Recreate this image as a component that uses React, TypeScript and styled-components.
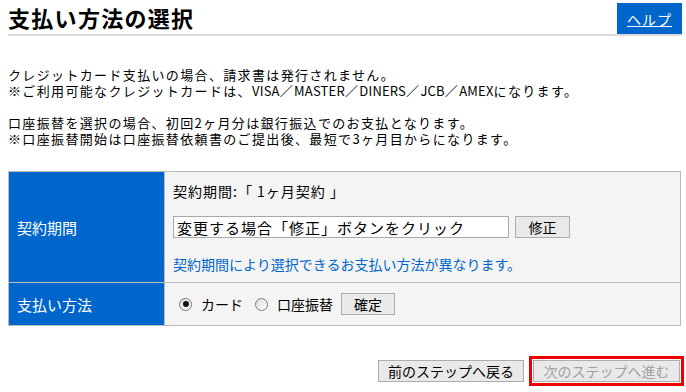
import React from "react";
import styled, { createGlobalStyle } from "styled-components";

const GlobalStyle = createGlobalStyle`
  html, body { margin: 0; padding: 0; background: #fff; overflow: hidden; }
  body {
    font-family: "Noto Sans CJK JP", "Noto Sans", sans-serif;
    color: #000;
  }
`;

const Page = styled.div`
  width: 676px;
  padding: 3px 0 0 8px;
`;

const Header = styled.div`
  width: 674px;
  display: flex;
  justify-content: space-between;
  align-items: flex-end;
  border-bottom: 2px solid #dcdcdc;
`;

const Title = styled.h1`
  margin: 0 0 4px 0;
  font-size: 22px;
  line-height: 26px;
  font-weight: bold;
  letter-spacing: 1.3px;
`;

const HelpBox = styled.div`
  width: 65px;
  height: 31px;
  background: #0066cc;
  display: flex;
  align-items: center;
  justify-content: center;
`;

const HelpLink = styled.a`
  color: #fff;
  font-size: 14px;
  text-decoration: underline;
  letter-spacing: 1px;
`;

const Notes = styled.div`
  margin-top: 31px;
  font-size: 13px;
  line-height: 16px;
  letter-spacing: 1.35px;
`;

const NoteLine = styled.p<{ $gap?: boolean }>`
  margin: ${(p) => (p.$gap ? "16px" : "0")} 0 0 0;
  height: 16px;
  white-space: nowrap;
`;

const Latin = styled.span`
  letter-spacing: 0.2px;
`;

const Table = styled.table`
  margin-top: 24px;
  width: 673px;
  border-collapse: collapse;
  font-size: 14px;
`;

const HeadCell = styled.th`
  width: 147px;
  background: #0066cc;
  color: #fff;
  font-weight: normal;
  text-align: left;
  padding: 0 0 0 8px;
  border: 1px solid #bbb;
  font-size: 15px;
`;

const BodyCell = styled.td<{ $h: number }>`
  height: ${(p) => p.$h}px;
  background: #f4f4f4;
  border: 1px solid #bbb;
  padding: 0 0 0 8px;
  box-sizing: border-box;
`;

const Stack = styled.div`
  display: flex;
  flex-direction: column;
  padding: 9px 0 8px 0;
`;

const Line = styled.div`
  line-height: 20px;
  font-size: 14px;
  letter-spacing: 1px;
  white-space: pre;
`;

const EditRow = styled.div`
  display: flex;
  gap: 6px;
  margin: 15px 0 16px 0;
`;

const TextBox = styled.input`
  width: 336px;
  height: 22px;
  box-sizing: border-box;
  border: 1px solid #a9a9a9;
  background: #fff;
  font-family: inherit;
  font-size: 15px;
  letter-spacing: 1px;
  padding: 0 3px;
  margin: 0;
  outline: none;
`;

const Btn = styled.button<{ $w: number; $disabled?: boolean }>`
  width: ${(p) => p.$w}px;
  height: 22px;
  box-sizing: border-box;
  border: 1px solid #adadad;
  background: #e9e9e9;
  color: ${(p) => (p.$disabled ? "#a0a0a0" : "#000")};
  font-family: inherit;
  font-size: 14px;
  padding: 0;
  margin: 0;
  line-height: 20px;
`;

const InfoLink = styled.div`
  color: #0066cc;
  line-height: 20px;
  font-size: 14px;
`;

const RadioRow = styled.div`
  display: flex;
  align-items: center;
  padding-left: 6px;
`;

const RadioLabel = styled.label<{ $gap: number }>`
  display: flex;
  align-items: center;
  margin-right: ${(p) => p.$gap}px;
  font-size: 14px;
`;

const Radio = styled.input`
  appearance: none;
  -webkit-appearance: none;
  width: 13px;
  height: 13px;
  margin: 0 9px 0 0;
  border: 1px solid #7a7a7a;
  border-radius: 50%;
  background: linear-gradient(135deg, #dcdcdc, #ffffff);
  box-sizing: border-box;
  display: grid;
  place-items: center;
  &:checked::after {
    content: "";
    width: 6px;
    height: 6px;
    border-radius: 50%;
    background: #111;
  }
`;

const Footer = styled.div`
  margin-top: 30px;
  display: flex;
  justify-content: flex-end;
  align-items: center;
  gap: 5px;
`;

const Highlight = styled.div`
  border: 3px solid #ee0000;
  padding: 1px;
  display: flex;
`;

export default function App() {
  return (
    <>
      <GlobalStyle />
      <Page>
        <Header>
          <Title>支払い方法の選択</Title>
          <HelpBox>
            <HelpLink href="#">ヘルプ</HelpLink>
          </HelpBox>
        </Header>
        <Notes>
          <NoteLine>クレジットカード支払いの場合、請求書は発行されません。</NoteLine>
          <NoteLine>
            ※ご利用可能なクレジットカードは、<Latin>VISA</Latin>／<Latin>MASTER</Latin>／
            <Latin>DINERS</Latin>／<Latin>JCB</Latin>／<Latin>AMEX</Latin>になります。
          </NoteLine>
          <NoteLine $gap>口座振替を選択の場合、初回2ヶ月分は銀行振込でのお支払となります。</NoteLine>
          <NoteLine>※口座振替開始は口座振替依頼書のご提出後、最短で3ヶ月目からになります。</NoteLine>
        </Notes>
        <Table>
          <tbody>
            <tr>
              <HeadCell>契約期間</HeadCell>
              <BodyCell $h={111}>
                <Stack>
                  <Line>契約期間:「 1ヶ月契約 」</Line>
                  <EditRow>
                    <TextBox readOnly value="変更する場合「修正」ボタンをクリック" />
                    <Btn $w={55}>修正</Btn>
                  </EditRow>
                  <InfoLink>契約期間により選択できるお支払い方法が異なります。</InfoLink>
                </Stack>
              </BodyCell>
            </tr>
            <tr>
              <HeadCell>支払い方法</HeadCell>
              <BodyCell $h={43}>
                <RadioRow>
                  <RadioLabel $gap={12}>
                    <Radio type="radio" name="pay" defaultChecked />
                    カード
                  </RadioLabel>
                  <RadioLabel $gap={8}>
                    <Radio type="radio" name="pay" />
                    口座振替
                  </RadioLabel>
                  <Btn $w={54}>確定</Btn>
                </RadioRow>
              </BodyCell>
            </tr>
          </tbody>
        </Table>
        <Footer>
          <Btn $w={146}>前のステップへ戻る</Btn>
          <Highlight>
            <Btn $w={147} $disabled>次のステップへ進む</Btn>
          </Highlight>
        </Footer>
      </Page>
    </>
  );
}
